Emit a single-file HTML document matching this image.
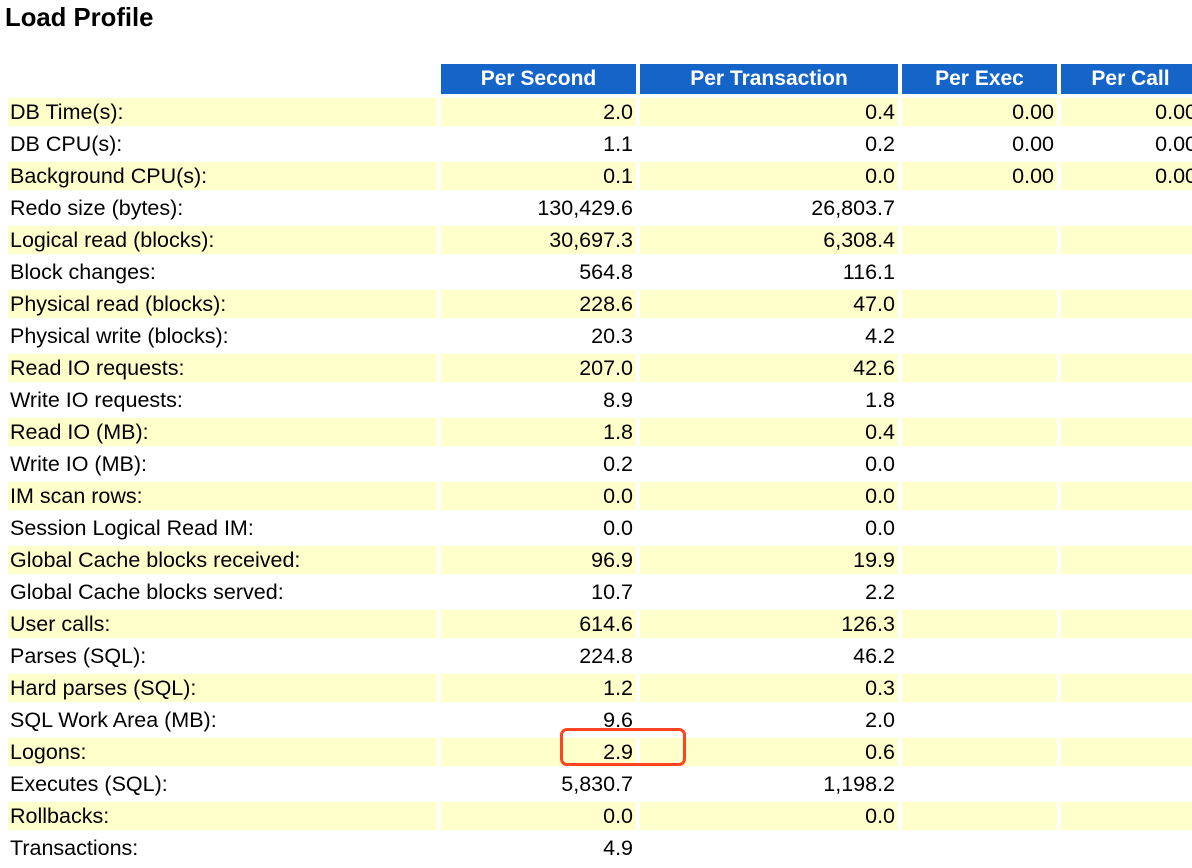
<!DOCTYPE html>
<html><head><meta charset="utf-8"><style>
html,body{margin:0;padding:0;background:#fff;width:1192px;height:868px;overflow:hidden;position:relative}
body{font-family:"Liberation Sans",Arial,sans-serif;color:#000}
h1{position:absolute;left:5px;top:3px;margin:0;font-size:25.7px;font-weight:bold;line-height:30px}
.r{position:absolute;left:8px;display:flex;height:28px;width:1300px}
.r div{box-sizing:border-box;height:28px;line-height:29px;font-size:21.5px;text-align:right;padding-right:3px;margin-right:4px;white-space:nowrap;overflow:hidden;flex-shrink:0}
.r div:nth-child(1){width:429px;text-align:left;padding-left:2px}
.r div:nth-child(2){width:195px}
.r div:nth-child(3){width:258px}
.r div:nth-child(4){width:155px}
.r div:nth-child(5){width:139px}
.y div{background:#ffffcc}
.h{top:64px;height:30px}
.h div{height:30px;line-height:29px;background:#1565c8;color:#fff;font-weight:bold;text-align:center;padding:0;font-size:21px}
.h div:nth-child(1){background:none}
.box{position:absolute;left:560px;top:728px;width:120px;height:32px;border:3px solid #ff4422;border-radius:7px}
</style></head><body>
<h1>Load Profile</h1>
<div class="r h"><div></div><div>Per Second</div><div>Per Transaction</div><div>Per Exec</div><div>Per Call</div></div>
<div class="r y" style="top:98px"><div>DB Time(s):</div><div>2.0</div><div>0.4</div><div>0.00</div><div>0.00</div></div>
<div class="r" style="top:130px"><div>DB CPU(s):</div><div>1.1</div><div>0.2</div><div>0.00</div><div>0.00</div></div>
<div class="r y" style="top:162px"><div>Background CPU(s):</div><div>0.1</div><div>0.0</div><div>0.00</div><div>0.00</div></div>
<div class="r" style="top:194px"><div>Redo size (bytes):</div><div>130,429.6</div><div>26,803.7</div><div></div><div></div></div>
<div class="r y" style="top:226px"><div>Logical read (blocks):</div><div>30,697.3</div><div>6,308.4</div><div></div><div></div></div>
<div class="r" style="top:258px"><div>Block changes:</div><div>564.8</div><div>116.1</div><div></div><div></div></div>
<div class="r y" style="top:290px"><div>Physical read (blocks):</div><div>228.6</div><div>47.0</div><div></div><div></div></div>
<div class="r" style="top:322px"><div>Physical write (blocks):</div><div>20.3</div><div>4.2</div><div></div><div></div></div>
<div class="r y" style="top:354px"><div>Read IO requests:</div><div>207.0</div><div>42.6</div><div></div><div></div></div>
<div class="r" style="top:386px"><div>Write IO requests:</div><div>8.9</div><div>1.8</div><div></div><div></div></div>
<div class="r y" style="top:418px"><div>Read IO (MB):</div><div>1.8</div><div>0.4</div><div></div><div></div></div>
<div class="r" style="top:450px"><div>Write IO (MB):</div><div>0.2</div><div>0.0</div><div></div><div></div></div>
<div class="r y" style="top:482px"><div>IM scan rows:</div><div>0.0</div><div>0.0</div><div></div><div></div></div>
<div class="r" style="top:514px"><div>Session Logical Read IM:</div><div>0.0</div><div>0.0</div><div></div><div></div></div>
<div class="r y" style="top:546px"><div>Global Cache blocks received:</div><div>96.9</div><div>19.9</div><div></div><div></div></div>
<div class="r" style="top:578px"><div>Global Cache blocks served:</div><div>10.7</div><div>2.2</div><div></div><div></div></div>
<div class="r y" style="top:610px"><div>User calls:</div><div>614.6</div><div>126.3</div><div></div><div></div></div>
<div class="r" style="top:642px"><div>Parses (SQL):</div><div>224.8</div><div>46.2</div><div></div><div></div></div>
<div class="r y" style="top:674px"><div>Hard parses (SQL):</div><div>1.2</div><div>0.3</div><div></div><div></div></div>
<div class="r" style="top:706px"><div>SQL Work Area (MB):</div><div>9.6</div><div>2.0</div><div></div><div></div></div>
<div class="r y" style="top:738px"><div>Logons:</div><div>2.9</div><div>0.6</div><div></div><div></div></div>
<div class="r" style="top:770px"><div>Executes (SQL):</div><div>5,830.7</div><div>1,198.2</div><div></div><div></div></div>
<div class="r y" style="top:802px"><div>Rollbacks:</div><div>0.0</div><div>0.0</div><div></div><div></div></div>
<div class="r" style="top:834px"><div>Transactions:</div><div>4.9</div><div></div><div></div><div></div></div>
<div class="box"></div>
</body></html>
